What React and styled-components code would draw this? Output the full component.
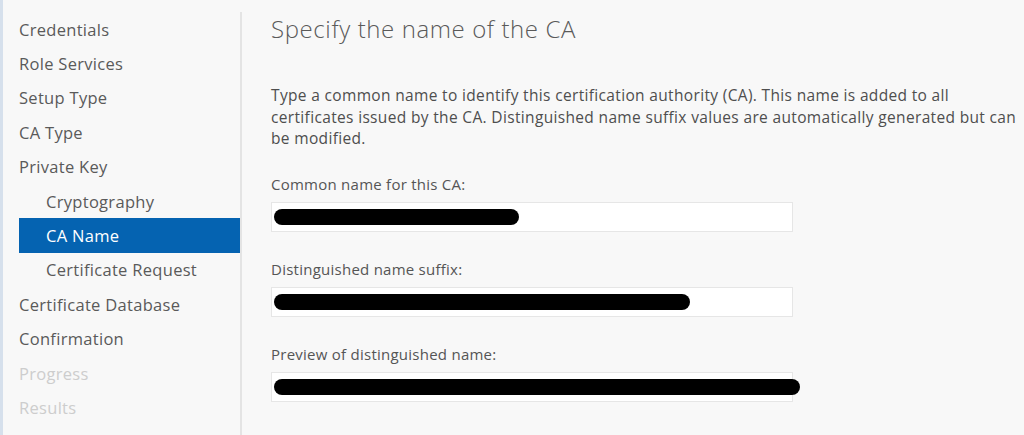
import styled, { createGlobalStyle } from 'styled-components';

const NAV_ITEMS = [
  { label: 'Credentials' },
  { label: 'Role Services' },
  { label: 'Setup Type' },
  { label: 'CA Type' },
  { label: 'Private Key' },
  { label: 'Cryptography', sub: true },
  { label: 'CA Name', sub: true, active: true },
  { label: 'Certificate Request', sub: true },
  { label: 'Certificate Database' },
  { label: 'Confirmation' },
  { label: 'Progress', disabled: true },
  { label: 'Results', disabled: true }
];

const FIELDS = [
  { label: 'Common name for this CA:', redacted: 245 },
  { label: 'Distinguished name suffix:', redacted: 416 },
  { label: 'Preview of distinguished name:', redacted: 526 }
];

export default function App() {
  return (
    <>
      <GlobalStyle />
      <Page>
        <Sidebar>
          <NavList>
            {NAV_ITEMS.map((item) => (
              <NavItem
                key={item.label}
                $sub={item.sub}
                $active={item.active}
                $disabled={item.disabled}
              >
                {item.label}
              </NavItem>
            ))}
          </NavList>
        </Sidebar>

        <Content>
          <Title>Specify the name of the CA</Title>
          <Intro>
            Type a common name to identify this certification authority (CA). This name is added to all
            <br />
            certificates issued by the CA. Distinguished name suffix values are automatically generated but can
            <br />
            be modified.
          </Intro>

          {FIELDS.map((field) => (
            <Field key={field.label}>
              <Label>{field.label}</Label>
              <InputBox>
                <Redaction $width={field.redacted} />
              </InputBox>
            </Field>
          ))}
        </Content>
      </Page>
    </>
  );
}

// стили
const GlobalStyle = createGlobalStyle`
  html, body {
    margin: 0;
    padding: 0;
    background: #f8f8f8;
  }
  body {
    font-family: "Open Sans", "Noto Sans", sans-serif;
  }
`;

const Page = styled.div`
  display: flex;
  height: 435px;
  border-left: 3px solid #d6e0ec;
  background: #f8f8f8;
  box-sizing: border-box;
  overflow: hidden;
`;

const Sidebar = styled.aside`
  width: 239px;
  flex-shrink: 0;
  margin-top: 12px;
  border-right: 2px solid #e4e4e4;
  box-sizing: border-box;
`;

const NavList = styled.ul`
  list-style: none;
  margin: 0;
  padding: 0 0 0 16px;
`;

const NavItem = styled.li`
  height: 34.4px;
  display: flex;
  align-items: center;
  padding-left: ${(p) => (p.$sub ? '27px' : '0')};
  font-size: 16.5px;
  letter-spacing: 0.3px;
  color: ${(p) => (p.$active ? '#ffffff' : p.$disabled ? '#cdcdcd' : '#5a5a5a')};
  background: ${(p) => (p.$active ? '#0563b1' : 'transparent')};
`;

const Content = styled.main`
  flex: 1;
  padding: 12px 0 0 29px;
  display: flex;
  flex-direction: column;
`;

const Title = styled.h1`
  margin: 0;
  font-size: 24px;
  font-weight: 300;
  line-height: 34px;
  color: #5a5a5a;
  letter-spacing: 0.6px;
`;

const Intro = styled.p`
  margin: 39px 0 24px;
  font-size: 15.5px;
  line-height: 21.5px;
  color: #4e4e4e;
  letter-spacing: 0.34px;
  white-space: nowrap;
`;

const Field = styled.div`
  display: flex;
  flex-direction: column;
  margin-bottom: 27px;
`;

const Label = styled.div`
  font-size: 15px;
  line-height: 21px;
  color: #555555;
  letter-spacing: 0.25px;
  margin-bottom: 7px;
`;

const InputBox = styled.div`
  width: 522px;
  height: 30px;
  box-sizing: border-box;
  border: 1px solid #e6e6e6;
  background: #ffffff;
  display: flex;
  align-items: center;
  padding-left: 2px;
`;

const Redaction = styled.div`
  width: ${(p) => p.$width}px;
  height: 16px;
  border-radius: 8px;
  background: #000000;
  flex-shrink: 0;
`;
